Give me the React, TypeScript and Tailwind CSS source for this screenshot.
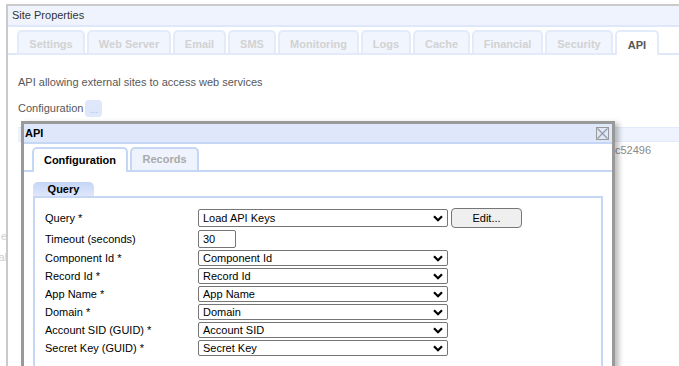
import React from "react";

const font = { fontFamily: '"Liberation Sans", Arial, sans-serif' };

const pageTabs = [
  { label: "Settings", w: "w-[68px]" },
  { label: "Web Server", w: "w-[84px]" },
  { label: "Email", w: "w-[53px]" },
  { label: "SMS", w: "w-[48px]" },
  { label: "Monitoring", w: "w-[81px]" },
  { label: "Logs", w: "w-[50px]" },
  { label: "Cache", w: "w-[57px]" },
  { label: "Financial", w: "w-[71px]" },
  { label: "Security", w: "w-[68px]" },
];

const selectRows = [
  { label: "Component Id *", value: "Component Id" },
  { label: "Record Id *", value: "Record Id" },
  { label: "App Name *", value: "App Name" },
  { label: "Domain *", value: "Domain" },
  { label: "Account SID (GUID) *", value: "Account SID" },
  { label: "Secret Key (GUID) *", value: "Secret Key" },
];

function Chevron() {
  return (
    <svg width="10" height="7" viewBox="0 0 10 7" className="shrink-0">
      <path d="M1 1.2 L5 5.2 L9 1.2" fill="none" stroke="#000" strokeWidth="2.2" />
    </svg>
  );
}

function FakeSelect({ value, tall = false }: { value: string; tall?: boolean }) {
  return (
    <div
      className={`w-[250px] ${tall ? "h-[18px]" : "h-[16px]"} border border-[#767676] rounded-[2px] bg-white flex items-center justify-between pl-[4px] pr-[4px] text-[11px] text-black`}
    >
      <span className="leading-none">{value}</span>
      <Chevron />
    </div>
  );
}

export default function App() {
  return (
    <div className="relative w-[679px] h-[366px] overflow-hidden bg-white text-[11px]" style={font}>
      <div className="flex h-full pt-[4px]">
        {/* clipped text from the page behind */}
        <div className="w-[6px] overflow-hidden text-[11px] text-[#d0d0d0]">
          <div className="mt-[222px] flex flex-col items-end -mr-[1px] leading-[21px]">
            <span>e</span>
            <span>al</span>
          </div>
        </div>

        {/* Site Properties panel */}
        <div className="flex-1 border-l-2 border-t-2 border-[#cacaca] flex flex-col">
          <div className="h-[21px] bg-[#eef3fd] border-b-2 border-[#dfe8fa] flex items-center pl-[4px] text-[11px] text-[#333]">
            Site Properties
          </div>
          <div className="flex items-end h-[28px] pl-[9px] border-b-2 border-[#dfe8fa]">
            <div className="flex gap-[2px] -mb-[2px]">
              {pageTabs.map((t) => (
                <div
                  key={t.label}
                  className={`${t.w} h-[25px] pt-[3px] border-2 border-[#e3ebfb] rounded-t-[5px] bg-[#f1f5fe] flex items-center justify-center text-[11px] font-bold text-[#d2d2d2]`}
                >
                  {t.label}
                </div>
              ))}
              <div className="w-[44px] h-[25px] pt-[3px] border-2 border-b-0 border-[#e3ebfb] rounded-t-[5px] bg-white flex items-center justify-center text-[11px] font-bold text-[#555]">
                API
              </div>
            </div>
          </div>

          <div className="pl-[10px] pt-[19px] text-[11px] text-[#585858]">
            API allowing external sites to access web services
          </div>
          <div className="pl-[10px] pt-[9px] flex items-center gap-[2px] text-[11px] text-[#585858]">
            <span>Configuration</span>
            <span className="w-[17px] h-[17px] rounded-[4px] bg-[#dfe8fb] text-[10px] text-[#a9bde3] flex items-center justify-center pt-[3px] leading-none">
              ...
            </span>
          </div>

          {/* table behind the dialog */}
          <div className="mt-[10px] ml-[10px]">
            <div className="h-[15px] bg-[#eef3fd] border-t border-b border-[#e3ebfb]" />
            <div className="h-[18px] flex items-center justify-end pr-[28px] text-[11px] text-[#8a8a8a]">
              <span>c52496</span>
            </div>
          </div>
        </div>
      </div>

      {/* API dialog */}
      <div className="absolute left-[21px] top-[121px] w-[594px] h-[270px] border-[3px] border-[#999] bg-white shadow-[4px_2px_5px_rgba(0,0,0,0.25)] flex flex-col">
        <div className="h-[20px] bg-[#dfe8fb] border-b-2 border-[#c6d7f6] flex items-center justify-between pl-[1px] pr-[3px]">
          <span className="text-[11px] font-bold text-black">API</span>
          <svg width="13" height="13" viewBox="0 0 13 13">
            <rect x="0.5" y="0.5" width="12" height="12" fill="none" stroke="#999" />
            <path d="M1.5 1.5 L11.5 11.5 M11.5 1.5 L1.5 11.5" stroke="#999" strokeWidth="1.2" />
          </svg>
        </div>

        <div className="flex items-end h-[28px] pl-[8px] border-b-2 border-[#c6d7f6]">
          <div className="flex gap-[2px] -mb-[2px]">
            <div className="w-[96px] h-[25px] border-2 border-b-0 border-[#c6d7f6] rounded-t-[5px] bg-white flex items-center justify-center text-[11px] font-bold text-black">
              Configuration
            </div>
            <div className="w-[69px] h-[25px] border-2 border-[#c6d7f6] rounded-t-[5px] bg-[#eef3fd] flex items-center justify-center text-[11px] font-bold text-[#aaa]">
              Records
            </div>
          </div>
        </div>

        <div className="ml-[9px] mr-[9px] mt-[10px] flex-1 flex flex-col">
          <div className="w-[61px] h-[14px] rounded-t-[5px] bg-gradient-to-b from-[#c4d5f6] to-[#dfe8fb] flex items-center justify-center text-[11px] font-bold text-black">
            Query
          </div>
          <div className="flex-1 border-2 border-[#c6d7f6] pl-[10px] pt-[10px] text-[11px] text-black">
            <div className="flex items-center h-[20px]">
              <span className="w-[153px]">Query *</span>
              <FakeSelect value="Load API Keys" tall />
              <button className="ml-[3px] w-[71px] h-[20px] border border-[#767676] rounded-[4px] bg-[#efefef] text-[11px] text-black leading-none">
                Edit...
              </button>
            </div>
            <div className="flex items-center h-[18px] mt-[2px]">
              <span className="w-[153px]">Timeout (seconds)</span>
              <div className="w-[38px] h-[18px] border border-[#767676] rounded-[2px] flex items-center pl-[4px]">
                30
              </div>
            </div>
            <div className="flex flex-col gap-[2px] mt-[2px]">
              {selectRows.map((r) => (
                <div key={r.label} className="flex items-center h-[16px]">
                  <span className="w-[153px]">{r.label}</span>
                  <FakeSelect value={r.value} />
                </div>
              ))}
            </div>
          </div>
        </div>
      </div>
    </div>
  );
}
